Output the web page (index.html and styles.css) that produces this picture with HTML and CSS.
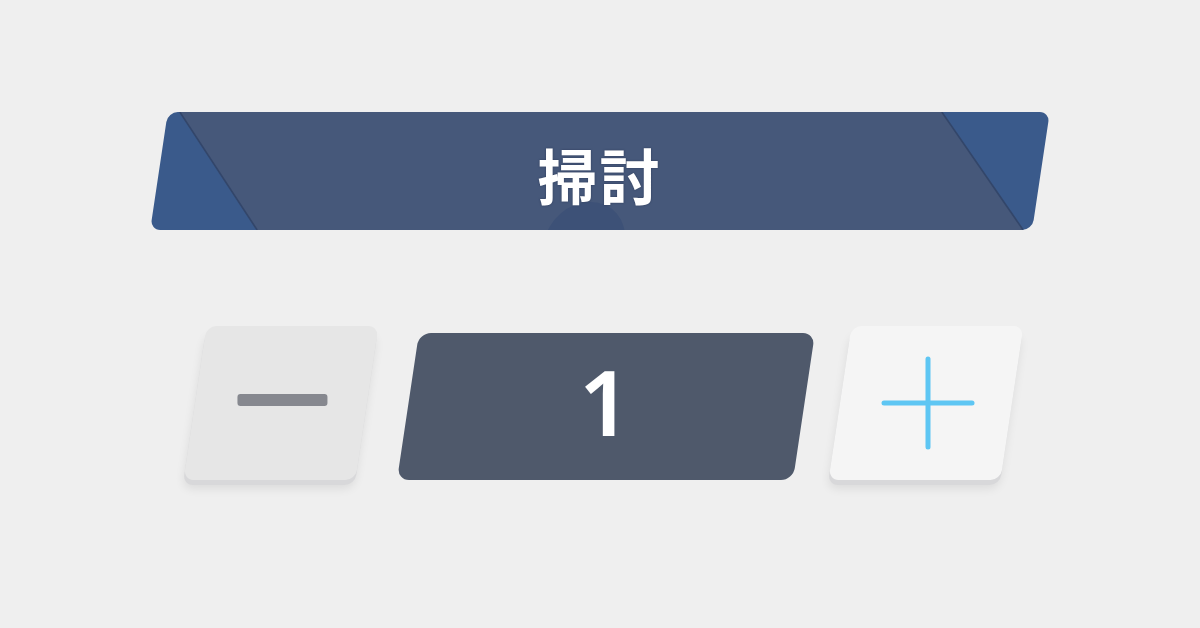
FILE: index.html
```html
<!DOCTYPE html>
<html lang="ja">
<head>
<meta charset="utf-8">
<title>掃討</title>
<link rel="stylesheet" href="styles.css">
</head>
<body>
<div class="page">
  <div class="banner">
    <svg class="banner-bg" viewBox="0 0 882 118" preserveAspectRatio="none" aria-hidden="true">
      <polygon points="12,0 774,0 873,118 107,118" fill="#46587a"/>
      <circle cx="436" cy="130" r="40" fill="#3d5177"/>
      <line x1="12" y1="0" x2="107" y2="118" stroke="#33466a" stroke-width="1.5"/>
      <line x1="774" y1="0" x2="873" y2="118" stroke="#33466a" stroke-width="1.5"/>
    </svg>
    <span class="banner-label">掃討</span>
  </div>
  <div class="stepper">
    <div class="btn btn-minus">
      <span class="minus-bar"></span>
    </div>
    <div class="value-box">
      <span class="value">1</span>
    </div>
    <div class="btn btn-plus">
      <svg class="plus-icon" viewBox="0 0 96 96" aria-hidden="true">
        <line x1="48" y1="4" x2="48" y2="92" stroke="#5ec6f3" stroke-width="5" stroke-linecap="round"/>
        <line x1="4" y1="48" x2="92" y2="48" stroke="#5ec6f3" stroke-width="5" stroke-linecap="round"/>
      </svg>
    </div>
  </div>
</div>
</body>
</html>
```

FILE: styles.css
```css
html, body {
  margin: 0;
  padding: 0;
}
body {
  width: 1200px;
  height: 628px;
  overflow: hidden;
  background: #efefef;
  font-family: "Noto Sans", "Noto Sans CJK JP", sans-serif;
}
.page {
  display: flex;
  flex-direction: column;
  align-items: center;
  padding-top: 112px;
  gap: 95px;
}
.banner {
  position: relative;
  width: 882px;
  height: 118px;
  background: #3a5a8b;
  border-radius: 10px;
  overflow: hidden;
  transform: skewX(-8.5deg);
  display: flex;
  align-items: center;
  justify-content: center;
}
.banner-bg {
  position: absolute;
  left: 0;
  top: 0;
  width: 100%;
  height: 100%;
}
.banner-label {
  position: relative;
  transform: skewX(8.5deg);
  font-family: "Noto Sans CJK JP", "Noto Sans CJK SC", sans-serif;
  font-weight: 700;
  font-size: 60px;
  line-height: 1;
  color: #ffffff;
  letter-spacing: 2px;
  margin-top: 6px;
  text-shadow: 0 0 2px rgba(30, 42, 70, 0.7);
}
.stepper {
  display: flex;
  align-items: center;
  gap: 40px;
  padding-left: 6px;
}
.btn {
  width: 172px;
  height: 154px;
  border-radius: 10px;
  transform: skewX(-8.5deg);
  display: flex;
  align-items: center;
  justify-content: center;
  box-shadow: 0 5px 0 #d8d8da, 0 9px 9px rgba(0, 0, 0, 0.08);
}
.btn-minus {
  background: #e6e6e6;
  margin-right: 1px;
}
.btn-plus {
  background: #f5f5f5;
  margin-left: -4px;
}
.minus-bar {
  display: block;
  width: 90px;
  height: 12px;
  border-radius: 3px;
  background: #86888f;
  transform: skewX(8.5deg);
  margin-top: -6px;
  margin-left: 2px;
}
.plus-icon {
  width: 96px;
  height: 96px;
  transform: skewX(8.5deg);
  margin-left: 3px;
}
.value-box {
  width: 396px;
  height: 147px;
  margin-top: 8px;
  border-radius: 12px;
  background: #4f596b;
  transform: skewX(-8.5deg);
  display: flex;
  align-items: center;
  justify-content: center;
}
.value {
  transform: skewX(8.5deg);
  font-family: "Noto Sans", sans-serif;
  font-weight: 600;
  font-size: 91px;
  line-height: 1;
  color: #ffffff;
  margin-top: -10px;
  margin-left: -4px;
}
```
